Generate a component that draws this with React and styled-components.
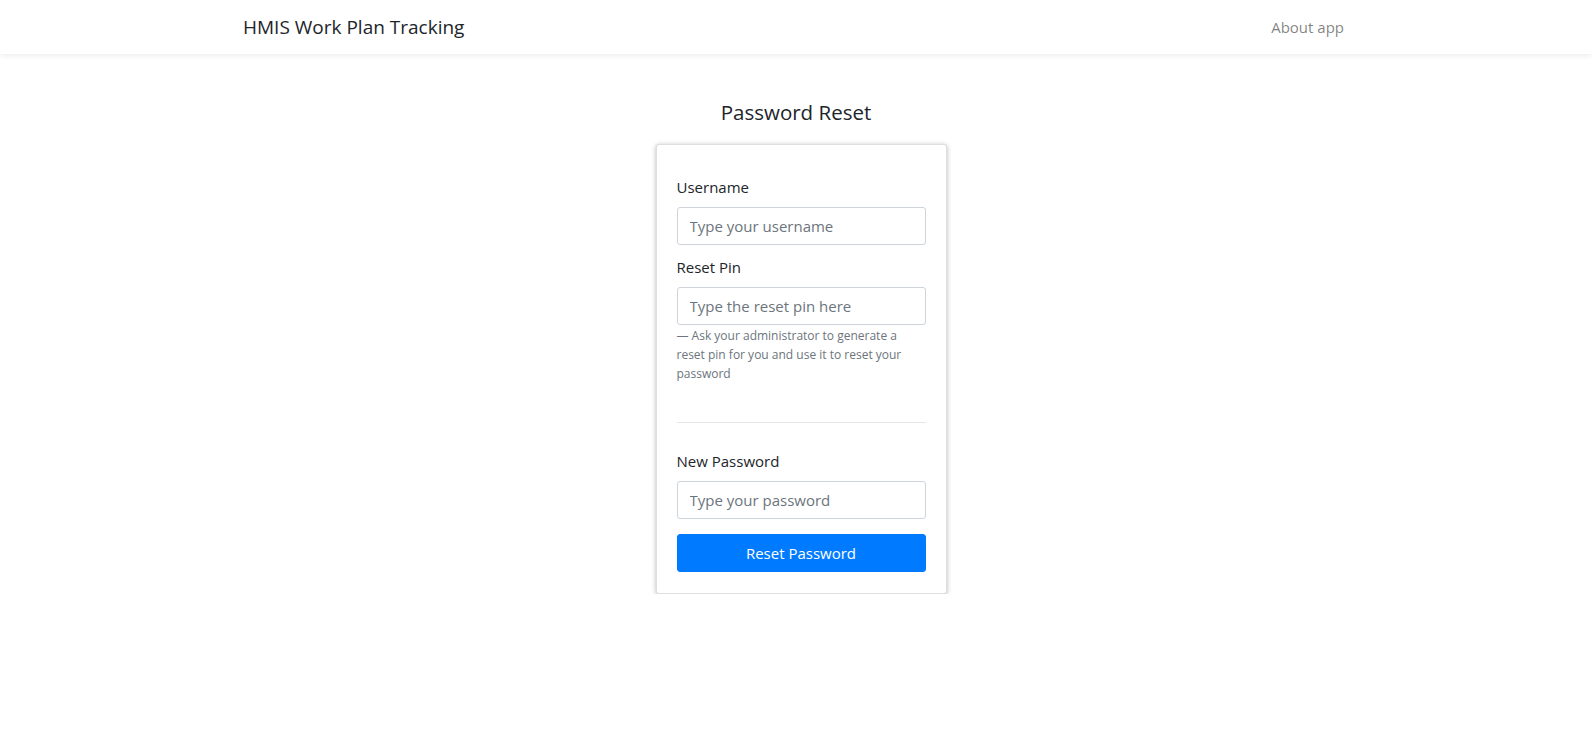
import React from "react";
import styled, { createGlobalStyle } from "styled-components";

const GlobalStyle = createGlobalStyle`
  body {
    margin: 0;
    background: #fff;
    color: #212529;
    font-family: "Open Sans", "Noto Sans", "Liberation Sans", sans-serif;
    font-size: 15px;
    line-height: 1.5;
  }
  * { box-sizing: border-box; }
`;

const NavBar = styled.nav`
  height: 54px;
  background: #fff;
  box-shadow: 0 2px 5px rgba(0, 0, 0, 0.07);
`;

const NavInner = styled.div`
  max-width: 1140px;
  height: 100%;
  margin: 0 auto;
  padding: 0 15px;
  display: flex;
  align-items: center;
  justify-content: space-between;
`;

const Brand = styled.a`
  font-size: 19px;
  color: #212529;
  text-decoration: none;
  padding-left: 2px;
`;

const NavLink = styled.a`
  font-size: 15px;
  color: rgba(0, 0, 0, 0.5);
  text-decoration: none;
  padding: 0 7px;
`;

const Main = styled.main`
  display: flex;
  flex-direction: column;
  align-items: center;
  padding-top: 46px;
`;

const Title = styled.h4`
  margin: 0 0 19px;
  font-size: 20.5px;
  font-weight: 400;
  line-height: 1.2;
  color: #212529;
`;

const Card = styled.div`
  width: 291px;
  margin-left: 10px;
  background: #fff;
  border: 1px solid rgba(0, 0, 0, 0.125);
  border-radius: 3px;
  box-shadow: 0 1px 5px rgba(0, 0, 0, 0.28);
  padding: 30px 20px 21px;
`;

const Group = styled.div`
  margin-bottom: ${(p) => p.$gap ?? 10}px;
  margin-top: ${(p) => p.$top ?? 0}px;
`;

const Label = styled.label`
  display: block;
  font-size: 15px;
  line-height: 24px;
  margin-bottom: 8px;
  color: #212529;
`;

const Input = styled.input`
  display: block;
  width: 100%;
  height: 38px;
  padding: 6px 12px;
  font-family: inherit;
  font-size: 15px;
  color: #495057;
  background: #fff;
  border: 1px solid #ced4da;
  border-radius: 3px;
  &::placeholder {
    color: #6c757d;
  }
`;

const Help = styled.small`
  display: block;
  margin-top: 1px;
  font-size: 12px;
  line-height: 19px;
  color: #6c757d;
`;

const Divider = styled.hr`
  margin: 0;
  border: 0;
  border-top: 1px solid #e4e6e8;
`;

const Button = styled.button`
  display: block;
  width: 100%;
  height: 38px;
  font-family: inherit;
  font-size: 15px;
  color: #fff;
  background: #007bff;
  border: 1px solid #007bff;
  border-radius: 3px;
  margin-top: 15px;
  cursor: pointer;
`;

export default function App() {
  return (
    <>
      <GlobalStyle />
      <NavBar>
        <NavInner>
          <Brand href="#">HMIS Work Plan Tracking</Brand>
          <NavLink href="#">About app</NavLink>
        </NavInner>
      </NavBar>
      <Main>
        <Title>Password Reset</Title>
        <Card>
          <form onSubmit={(e) => e.preventDefault()}>
            <Group>
              <Label>Username</Label>
              <Input type="text" placeholder="Type your username" />
            </Group>
            <Group $gap={39}>
              <Label>Reset Pin</Label>
              <Input type="text" placeholder="Type the reset pin here" />
              <Help>
                — Ask your administrator to generate a reset pin for you and use it to reset your password
              </Help>
            </Group>
            <Divider />
            <Group $gap={0} $top={26}>
              <Label>New Password</Label>
              <Input type="password" placeholder="Type your password" />
            </Group>
            <Button type="submit">Reset Password</Button>
          </form>
        </Card>
      </Main>
    </>
  );
}
